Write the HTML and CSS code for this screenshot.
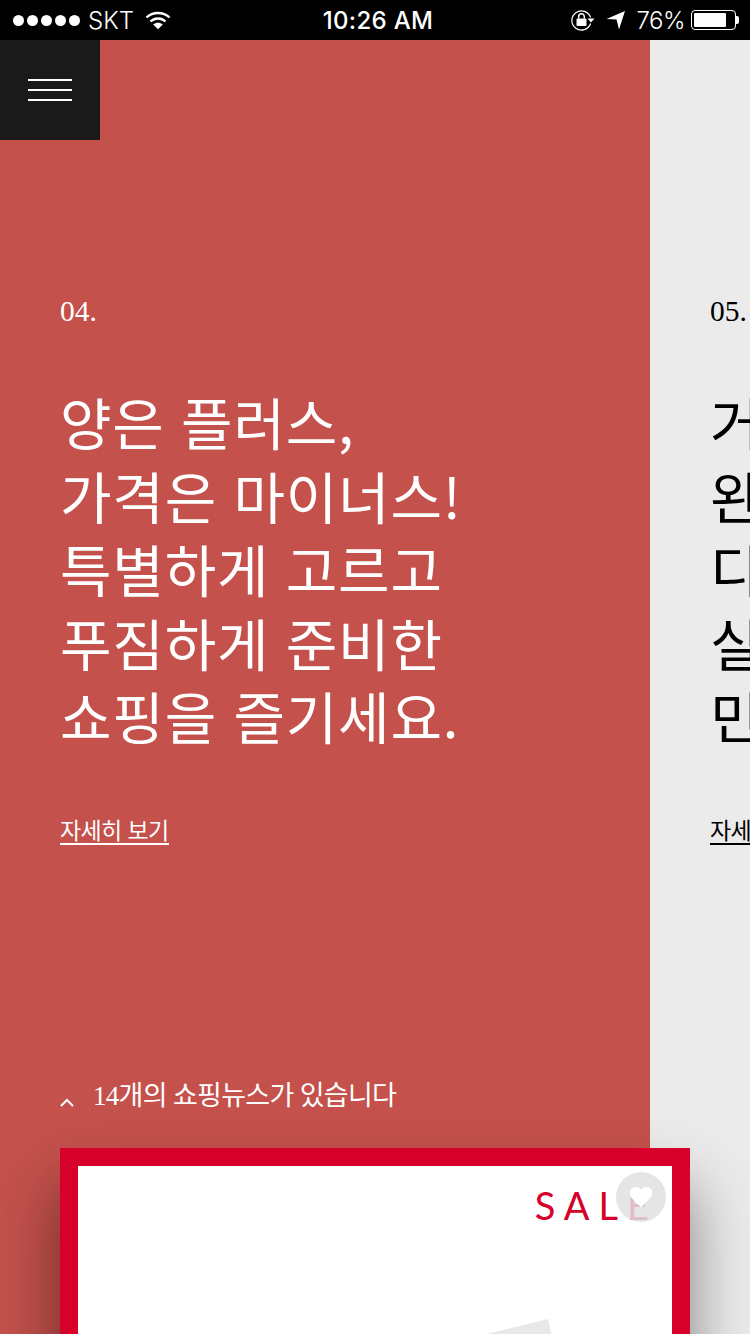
FILE: index.html

```html
<!DOCTYPE html>
<html lang="ko">
<head>
  <meta charset="UTF-8" />
  <meta name="viewport" content="width=device-width, initial-scale=1.0"/>
  <title>쇼핑뉴스</title>
  <link rel="stylesheet" href="styles.css">
</head>
<body>
  <div class="status">
    <div class="status-left">
      <span class="dots"><i></i><i></i><i></i><i></i><i></i></span>
      <span class="carrier">SKT</span>
      <svg class="wifi" width="26" height="20" viewBox="0 0 26 20">
        <path d="M1.5 7.5C7.8 1.5 18.2 1.5 24.5 7.5" fill="none" stroke="#fff" stroke-width="2.4"/>
        <path d="M5.5 11.5C9.8 7.4 16.2 7.4 20.5 11.5" fill="none" stroke="#fff" stroke-width="2.4"/>
        <path d="M8.2 14.6L13 19.2L17.8 14.6C15 12 11 12 8.2 14.6Z" fill="#fff"/>
      </svg>
    </div>
    <div class="clock">10:26 AM</div>
    <div class="status-right">
      <svg width="26" height="22" viewBox="0 0 26 22">
        <path d="M20.6 14.5A9.6 9.6 0 1 1 20.6 8.5" fill="none" stroke="#fff" stroke-width="1.2"/>
        <path d="M17.5 9.5H24.5L21 13.5Z" fill="#fff"/>
        <rect x="6.5" y="9.5" width="10" height="7.5" rx="1" fill="#fff"/>
        <path d="M8.7 9.5V7.6a2.8 2.8 0 0 1 5.6 0V9.5" fill="none" stroke="#fff" stroke-width="1.5"/>
      </svg>
      <svg class="arrow" width="20" height="20" viewBox="0 0 20 20"><path d="M0.5 9L19 1L13 19.5L10.5 9.5Z" fill="#fff"/></svg>
      <span class="percent">76%</span>
      <span class="battery"><span class="battery-fill"></span></span>
      <span class="battery-tip"></span>
    </div>
  </div>

  <main class="stage">
    <button class="menu"><span></span><span></span><span></span></button>

    <div class="slides">
      <section class="slide slide-red">
        <div class="num">04.</div>
        <h2>양은 플러스,<br>가격은 마이너스!<br>특별하게 고르고<br>푸짐하게 준비한<br>쇼핑을 즐기세요.</h2>
        <a class="more">자세히 보기</a>
        <div class="news">
          <svg width="14" height="9" viewBox="0 0 14 9"><path d="M1 8L7 2L13 8" fill="none" stroke="#fff" stroke-width="2"/></svg>
          <span>14개의 쇼핑뉴스가 있습니다</span>
        </div>
      </section>
      <section class="slide slide-grey">
        <div class="num">05.</div>
        <h2>거실을<br>완성하는<br>디자인,<br>실용적인<br>민트 소품</h2>
        <a class="more">자세히 보기</a>
      </section>
    </div>

    <div class="card">
      <div class="sale">SALE</div>
      <div class="like">
        <svg width="24" height="22" viewBox="0 0 26 24"><path d="M13 23.5L2.6 12.8C-0.6 9.4 0.4 3.4 4.6 1.6C8 0.2 11.4 1.4 13 4.4C14.6 1.4 18 0.2 21.4 1.6C25.6 3.4 26.6 9.4 23.4 12.8Z" fill="#fff"/></svg>
      </div>
      <div class="paper"></div>
    </div>
  </main>
</body>
</html>
```

FILE: styles.css

```css
* { box-sizing: border-box; }
html, body { margin: 0; height: 1334px; overflow: hidden; }
body { font-family: "Liberation Serif", "Noto Sans CJK KR", serif; background: #000; }

.status { height: 40px; background: #000; color: #fff; display: flex; align-items: center; justify-content: space-between; padding: 0 11px 0 13px; font-family: Inter, "Liberation Sans", sans-serif; font-size: 24px; }
.status-left { display: flex; align-items: center; width: 254px; }
.dots { display: flex; gap: 3px; }
.dots i { width: 11px; height: 11px; border-radius: 50%; background: #fff; display: block; }
.carrier { margin-left: 8px; font-weight: 300; }
.wifi { margin-left: 11px; }
.clock { font-weight: 500; letter-spacing: 0.3px; }
.status-right { display: flex; align-items: center; width: 250px; justify-content: flex-end; }
.arrow { margin-left: 10px; }
.percent { margin-left: 11px; font-weight: 300; letter-spacing: -0.5px; }
.battery { width: 45px; height: 20px; border: 1px solid #fff; border-radius: 4px; padding: 2px; margin-left: 6px; display: flex; }
.battery-fill { width: 32px; background: #fff; border-radius: 1px; }
.battery-tip { width: 3px; height: 8px; background: #fff; border-radius: 0 2px 2px 0; }

.stage { position: relative; height: 1294px; background: #ebebeb; overflow: hidden; }
.menu { position: absolute; left: 0; top: 0; z-index: 2; width: 100px; height: 100px; background: #1a1a1a; border: 0; padding: 0; display: flex; flex-direction: column; justify-content: center; align-items: center; gap: 8px; }
.menu span { display: block; width: 44px; height: 2px; background: #fff; }

.slides { display: flex; width: 1300px; height: 100%; }
.slide { width: 650px; height: 100%; padding: 253px 0 0 60px; flex: none; }
.slide-red { background: #c4514c; color: #fff; }
.slide-grey { background: #ebebeb; color: #000; }

.num { font-size: 29.5px; line-height: 36px; }
h2 { margin: 55px 0 0; font-family: "Noto Sans CJK KR", sans-serif; font-weight: 400; font-size: 56px; line-height: 73.5px; letter-spacing: 0.8px; white-space: nowrap; }
.more { display: inline-block; margin-top: 63px; font-family: "Noto Sans CJK KR", sans-serif; font-size: 23px; line-height: 28px; border-bottom: 2px solid currentColor; letter-spacing: -0.6px; }

.news { display: flex; align-items: center; gap: 19px; margin-top: 233px; font-size: 27px; line-height: 36px; letter-spacing: -0.7px; }
.news svg { margin-top: 14px; }

.card { position: absolute; left: 60px; top: 1108px; width: 630px; height: 300px; background: #fff; border: 18px solid #d6002a; box-shadow: 0 40px 60px rgba(0, 0, 0, 0.45); }
.sale { position: absolute; right: 23px; top: 14px; font-family: Lato, "Liberation Sans", sans-serif; font-size: 38px; line-height: 50px; letter-spacing: 9px; color: #d6002a; margin-right: -9px; }
.like { position: absolute; right: 6px; top: 6px; width: 50px; height: 50px; border-radius: 50%; background: rgba(225, 225, 225, 0.85); display: flex; align-items: center; justify-content: center; }
.paper { position: absolute; left: 412px; top: 160px; width: 66px; height: 60px; background: #e8e8e8; transform: rotate(-14deg); }
```
